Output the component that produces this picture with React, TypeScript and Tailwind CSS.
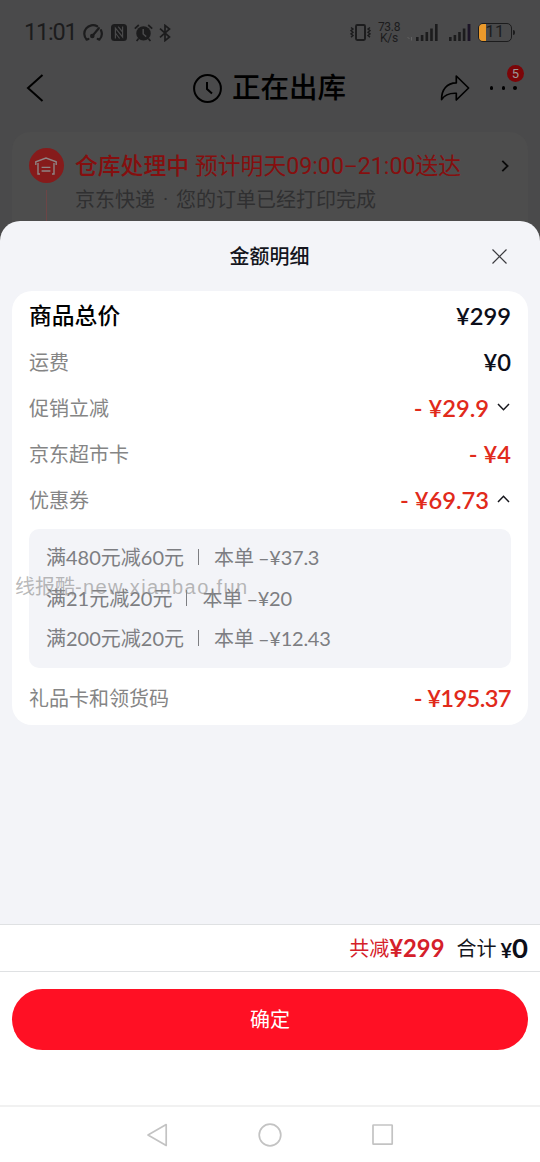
import { ReactNode } from 'react'
import clsx from 'clsx'

interface Row {
  label: string
  amount: string
  arrow?: 'up' | 'down'
  tight?: boolean
}

const rows: Row[] = [
  { label: '运费', amount: '¥0' },
  { label: '促销立减', amount: '- ¥29.9', arrow: 'down' },
  { label: '京东超市卡', amount: '- ¥4' },
  { label: '优惠券', amount: '- ¥69.73', arrow: 'up' },
]

const coupons = [
  { rule: '满480元减60元', used: '–¥37.3' },
  { rule: '满21元减20元', used: '–¥20' },
  { rule: '满200元减20元', used: '–¥12.43' },
]

function Arrow({ dir }: { dir: 'up' | 'down' }) {
  return (
    <svg className="ml-2 mr-px -mt-1 w-[13px] h-2 shrink-0" viewBox="0 0 13 8" fill="none" stroke="#16161c" strokeWidth="1.5">
      <path d={dir === 'down' ? 'M1 1L6.5 6.7L12 1' : 'M1 7L6.5 1.3L12 7'} />
    </svg>
  )
}

function Amount({ children, red, tight }: { children: ReactNode; red?: boolean; tight?: boolean }) {
  return (
    <span
      className={clsx(
        "font-['Lato','Noto_Sans_CJK_SC',sans-serif] text-[23.7px] leading-none font-semibold whitespace-pre",
        red ? 'text-[#e12a1b]' : 'text-[#0c0e19]',
        tight && 'tracking-[-0.6px]'
      )}
    >
      {children}
    </span>
  )
}

function Line({ label, amount, arrow, tight }: Row) {
  return (
    <div className="h-[46px] flex items-center justify-between">
      <span className="text-[20px] text-[#858585]">{label}</span>
      <span className="flex items-center pt-0.5">
        <Amount red={amount.startsWith('-')} tight={tight}>
          {amount}
        </Amount>
        {arrow && <Arrow dir={arrow} />}
      </span>
    </div>
  )
}

function StatusBar() {
  return (
    <div className="h-[62px] flex items-center pl-[24px] pr-[25px] pt-[3px] text-[#1c1c1d]">
      <span className="w-[53px] font-[Roboto] text-[23.5px] tracking-[-1.2px] leading-none whitespace-nowrap">11:01</span>
      {/* speed */}
      <svg className="ml-[6px] w-5 h-[18px]" viewBox="0 0 20 18" fill="none" stroke="currentColor" strokeWidth="2.2" strokeLinecap="round">
        <path d="M3.6 15.6A8.6 8.6 0 0 1 14.2 2.3M18 6.2a8.6 8.6 0 0 1-1.6 9.4M3.6 15.6l1.8-.6M16.4 15.6l-1.6-.6" />
        <path d="M15.8 4.2L9.6 11.6" />
        <circle cx="9.3" cy="12" r="1.2" fill="currentColor" />
      </svg>
      {/* nfc */}
      <svg className="ml-2 w-4 h-[17px]" viewBox="0 0 16 17">
        <rect width="16" height="17" rx="3.5" fill="currentColor" />
        <path d="M4.4 14.5V4.2L11.6 13V2.6M7.2 2.6L11.6 8M4.4 9L8.6 14.5" fill="none" stroke="#4a4a4b" strokeWidth="1.2" />
      </svg>
      {/* alarm */}
      <svg className="ml-[7px] w-[19px] h-[18px]" viewBox="0 0 19 18" fill="none" stroke="currentColor">
        <circle cx="9.5" cy="9.4" r="7.2" fill="currentColor" stroke="none" />
        <path d="M.8 4.6L4.8 1M18.2 4.6L14.2 1M4.6 14.5L2.6 17M14.4 14.5L16.4 17" strokeWidth="1.7" />
        <path d="M9.2 5v5l3 2.6" stroke="#4a4a4b" strokeWidth="1.5" />
      </svg>
      {/* bluetooth */}
      <svg className="ml-[6px] w-3 h-[18px]" viewBox="0 0 12 18" fill="none" stroke="currentColor" strokeWidth="1.7">
        <path d="M1 4.6L10.5 13L6 16.6V1.4L10.5 5L1 13.4" />
      </svg>
      <span className="flex-1" />
      {/* vibrate */}
      <svg className="mr-px w-[21px] h-[17px]" viewBox="0 0 21 17" fill="none" stroke="currentColor" strokeWidth="1.9">
        <rect x="6" y="1" width="9" height="15" rx="1.2" />
        <path d="M1 3.5l2 1.6-2 1.6 2 1.6-2 1.6 2 1.6-2 1.6M20 3.5l-2 1.6 2 1.6-2 1.6 2 1.6-2 1.6 2 1.6" strokeWidth="1.4" />
      </svg>
      <span className="ml-[6px] w-[22px] flex flex-col items-center font-[Roboto] text-[12px] leading-[11px] tracking-[-0.3px] whitespace-nowrap">
        <span>73.8</span>
        <span>K/s</span>
      </span>
      <svg className="ml-[7px] w-[31px] h-[17px]" viewBox="0 0 31 17" fill="currentColor">
        <path d="M.5 13l2 2M4.5 13v3.5" stroke="#626263" strokeWidth="1" />
        <path d="M9 13h2.6v4H9zM13.8 11h2.6v6h-2.6zM18.5 8h2.6v9h-2.6zM23.2 4.5h2.6V17h-2.6zM28 0h2.6v17H28z" />
      </svg>
      <svg className="ml-[10px] w-[23px] h-[17px]" viewBox="0 0 23 17" fill="currentColor">
        <path d="M1 13h2.6v4H1zM5.6 11h2.6v6H5.6zM10.2 8h2.6v9h-2.6zM14.8 4.5h2.6V17h-2.6z" />
        <path d="M19.6 0h2.8v17h-2.8z" fill="#1d1528" />
      </svg>
      <span className="ml-[7px] relative w-[34px] h-[19px] rounded-[5px] border-[1.5px] border-[#1c1c1d] flex items-center justify-center overflow-hidden">
        <span className="absolute left-0 top-0 bottom-0 w-[7px] bg-[#eb9a2b]" />
        <span className="relative font-[Roboto] text-[16.5px] leading-none tracking-[0.2px]">11</span>
      </span>
      <span className="ml-[1px] w-[2px] h-[5px] rounded-r-sm bg-[#1c1c1d]" />
    </div>
  )
}

function TitleBar() {
  return (
    <div className="h-[52px] flex items-center justify-between pl-[26px] pr-[23px] text-black">
      <svg className="w-[18px] h-7" viewBox="0 0 18 28" fill="none" stroke="currentColor" strokeWidth="2">
        <path d="M16.5 1L2 14L16.5 27" />
      </svg>
      <div className="flex items-center ml-[55px]">
        <svg className="w-[29px] h-[29px]" viewBox="0 0 29 29" fill="none" stroke="currentColor" strokeWidth="2">
          <circle cx="14.5" cy="14.5" r="13.4" />
          <path d="M14 8v7l5 4.6" />
        </svg>
        <span className="ml-[10px] pb-[3px] text-[28.5px] leading-none font-medium">正在出库</span>
      </div>
      <div className="flex items-center">
        <svg className="w-[30px] h-7" viewBox="0 0 30 28" fill="none" stroke="currentColor" strokeWidth="1.7">
          <path d="M16.3 2L28.6 14L16.3 26V19.3C9.5 19 4.6 20.8 1.6 25.6C1.4 15.5 7 9 16.3 8.8Z" strokeLinejoin="round" />
        </svg>
        <div className="relative ml-5 w-[27px] h-7 flex items-center justify-between">
          <span className="w-[3.5px] h-[3.5px] rounded-full bg-black" />
          <span className="w-[3.5px] h-[3.5px] rounded-full bg-black" />
          <span className="w-[3.5px] h-[3.5px] rounded-full bg-black" />
          <span className="absolute -top-[9px] left-[17px] w-[17px] h-[17px] rounded-full bg-[#7c0508] text-[#9b9797] flex items-center justify-center font-[Roboto] text-[13px] leading-none">
            5
          </span>
        </div>
      </div>
    </div>
  )
}

function DeliveryCard() {
  return (
    <div className="mx-3 mt-[18px] h-[120px] rounded-t-[18px] bg-[#4d4d4d] flex">
      <div className="w-[68px] flex flex-col items-center pt-4">
        <span className="w-[35px] h-[35px] rounded-full bg-[#861b1b] flex items-center justify-center">
          <svg className="w-[22px] h-[18px]" viewBox="0 0 22 18" fill="none" stroke="#8f8484" strokeWidth="1.4">
            <path d="M.8 8V4.8L11 1L21.2 4.8V8M3 6V17H5M19 6V17H17M6.6 10.4H15.4M6.6 14H15.4" />
          </svg>
        </span>
        <span className="mt-[7px] w-px flex-1 bg-[#6c4546]" />
      </div>
      <div className="-ml-[5px] pt-[19px] whitespace-nowrap">
        <div className="flex items-center h-[30px] text-[#850f0f] text-[22.8px] leading-none">
          <span className="pb-[2px] font-medium">仓库处理中</span>
          <span className="ml-[6px] pt-px text-[22.8px] font-['Roboto','Noto_Sans_CJK_SC',sans-serif]">
            预计明天<span className="text-[23.2px]">09:00</span>
            <span className="text-[21px]">–</span>
            <span className="text-[23.2px]">21:00</span>送达
          </span>
        </div>
        <div className="mt-[8px] flex text-[20px] leading-none text-[#303031]">
          <span>京东快递</span>
          <span className="w-[21px] text-center font-[Roboto]">·</span>
          <span>您的订单已经打印完成</span>
        </div>
      </div>
      <svg className="ml-auto mr-[19px] mt-[28px] w-2 h-3" viewBox="0 0 8 12" fill="none" stroke="#0a0a0a" strokeWidth="1.8">
        <path d="M1.3 .8L6.6 6L1.3 11.2" />
      </svg>
    </div>
  )
}

export default function App() {
  return (
    <div className="relative w-[540px] h-[1162px] overflow-hidden bg-[#4a4a4b] font-['Noto_Sans_CJK_SC',sans-serif] flex flex-col">
      <div className="h-[221px] shrink-0">
        <StatusBar />
        <TitleBar />
        <DeliveryCard />
      </div>

      {/* Sheet */}
      <div className="relative flex-1 rounded-t-[20px] bg-[#f3f4f8] flex flex-col overflow-hidden">
        <div className="h-[70px] shrink-0 flex items-center justify-between pl-[47px] pr-[33px]">
          <span className="w-0" />
          <span className="text-[20px] leading-none font-medium text-[#14151c]">金额明细</span>
          <svg className="w-[15px] h-[15px]" viewBox="0 0 15 15" stroke="#3c3c40" strokeWidth="1.2">
            <path d="M.5 .5L14.5 14.5M14.5 .5L.5 14.5" />
          </svg>
        </div>

        <div className="mx-3 h-[434px] shrink-0 rounded-[20px] bg-white pl-[17px] pr-[17px]">
          <div className="h-[48px] flex items-center justify-between">
            <span className="text-[22.8px] font-medium text-black">商品总价</span>
            <span className="pt-1 flex">
              <Amount>¥299</Amount>
            </span>
          </div>
          {rows.map((r) => (
            <Line key={r.label} {...r} />
          ))}
          <div className="mt-[6px] mb-[7px] h-[139px] rounded-[10px] bg-[#f3f4f8] pl-[17px] pt-2">
            {coupons.map((c) => (
              <div
                key={c.rule}
                className="h-[40.5px] flex items-center font-['Lato','Noto_Sans_CJK_SC',sans-serif] text-[20px] leading-none text-[#7d7e82] whitespace-nowrap"
              >
                <span>{c.rule}</span>
                <span className="ml-[14px] mr-[15px] w-px h-4 bg-[#7d7e82]" />
                <span>本单</span>
                <span className="ml-1 tracking-[-0.25px]">{c.used}</span>
              </div>
            ))}
          </div>
          <Line label="礼品卡和领货码" amount="- ¥195.37" tight />
        </div>

        {/* Footer */}
        <div className="mt-auto h-[238px] shrink-0 bg-white flex flex-col">
          <div className="h-[48px] border-y border-[#dfe1e3] flex items-center justify-end pr-3 leading-none whitespace-nowrap">
            <span className="text-[20px] text-[#d5202a]">共减</span>
            <span className="pt-[2px] font-[Lato] font-bold text-[23.8px] text-[#d5202a]">¥299</span>
            <span className="ml-3 text-[20px] text-[#14151c]">合计</span>
            <span className="ml-1 font-[Lato] font-bold text-[20px] text-[#0c0e19]">
              ¥<span className="text-[27.5px]">0</span>
            </span>
          </div>
          <button className="mx-3 mt-[17px] h-[61px] shrink-0 rounded-full bg-[#ff1024] text-white text-[20px] leading-none pb-[2px]">确定</button>
          <div className="mt-auto h-[57px] border-t-2 border-[#f1f1f1] flex items-center justify-center gap-[90px]">
            <svg className="w-[22px] h-6" viewBox="0 0 22 24" fill="none" stroke="#c3c3c3" strokeWidth="1.7" strokeLinejoin="round">
              <path d="M20.2 1.6V22.4L2 12Z" />
            </svg>
            <svg className="w-6 h-6" viewBox="0 0 24 24" fill="none" stroke="#c3c3c3" strokeWidth="1.7">
              <circle cx="12" cy="12" r="10.8" />
            </svg>
            <svg className="w-[22px] h-6" viewBox="0 0 22 24" fill="none" stroke="#c3c3c3" strokeWidth="1.7">
              <rect x="1" y="2" width="19.2" height="19.2" rx=".5" />
            </svg>
          </div>
        </div>
      </div>

      {/* Watermark */}
      <span className="absolute left-[15px] top-[577px] text-[20px] leading-[20px] text-[#8b8b8b]/60 whitespace-nowrap font-['Liberation_Sans','Noto_Sans_CJK_SC',sans-serif]">
        线报酷<span className="tracking-[1.4px]">-new.xianbao.fun</span>
      </span>
    </div>
  )
}
